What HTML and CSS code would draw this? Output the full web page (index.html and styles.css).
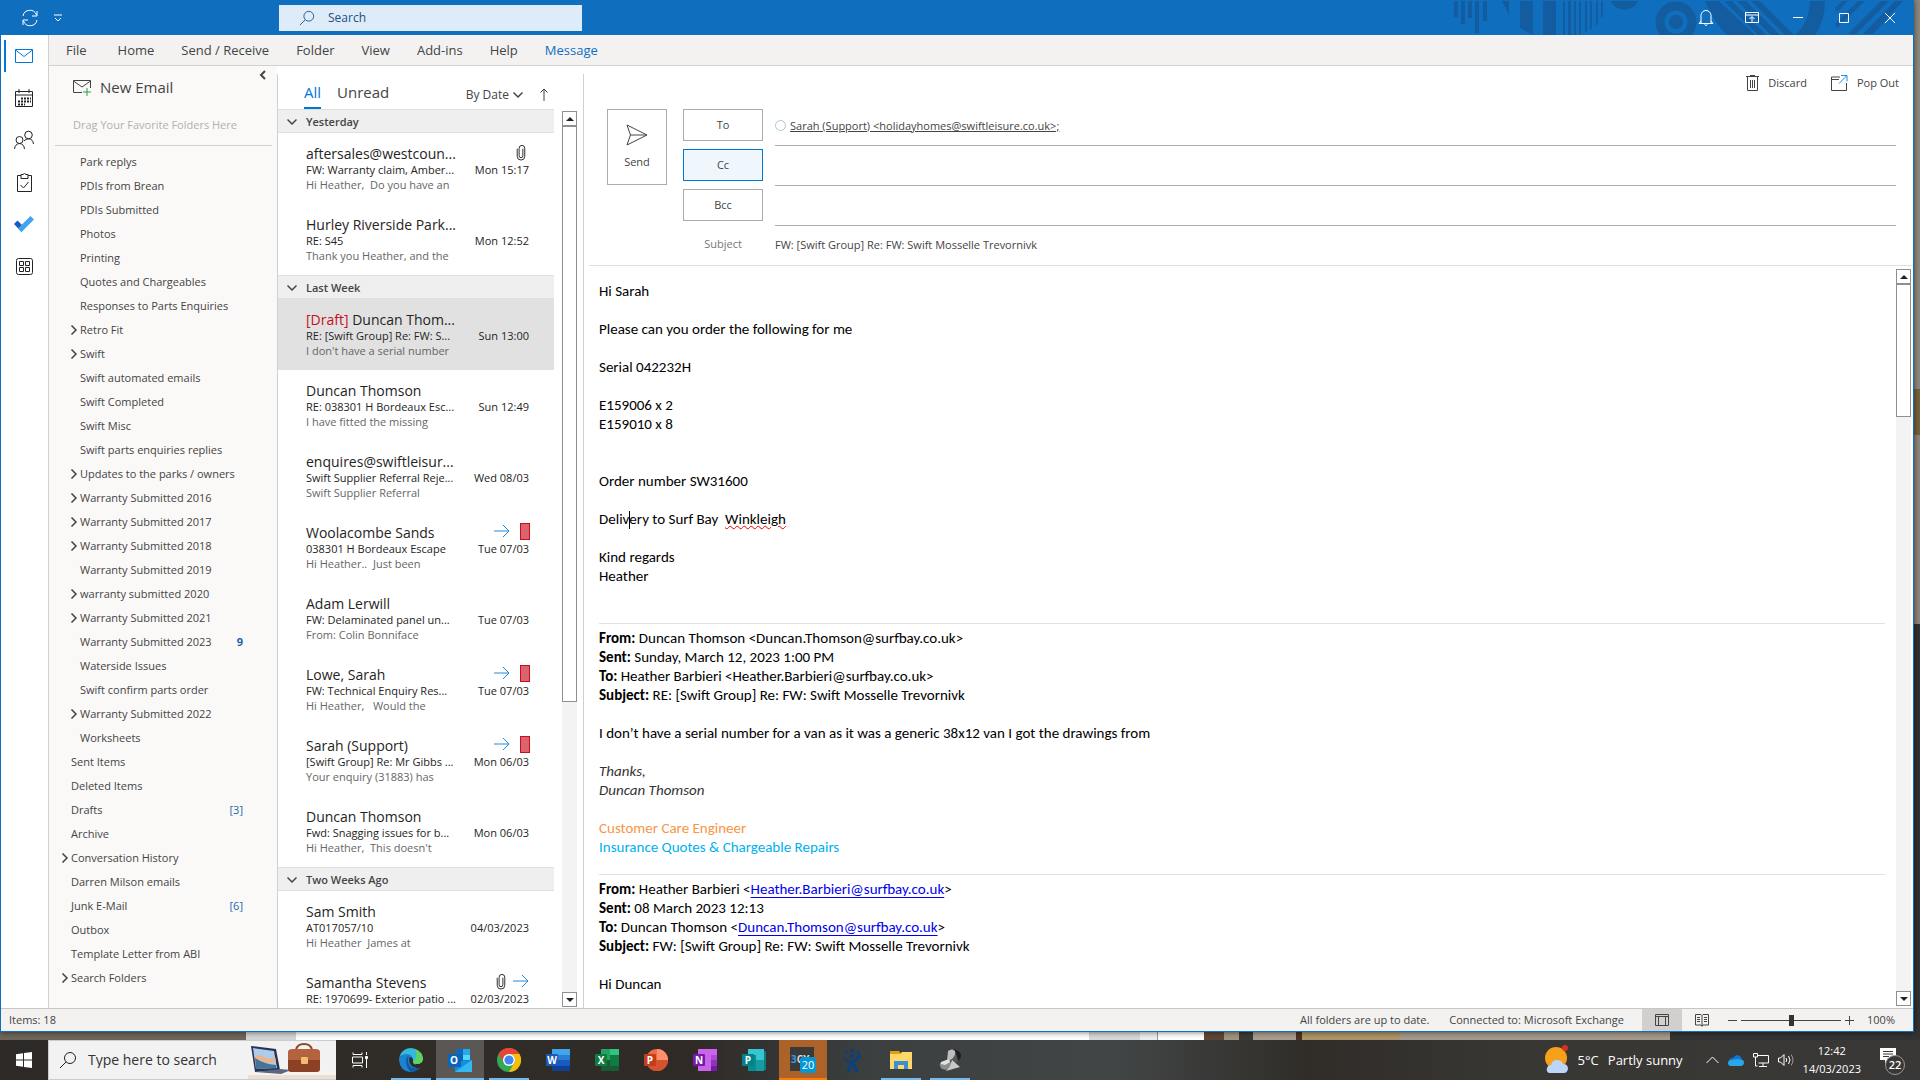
FILE: index.html
```html
<!DOCTYPE html>
<html lang="en">
<head>
<meta charset="UTF-8" />
<meta name="viewport" content="width=device-width, initial-scale=1" />
<title>Inbox - Outlook</title>
<link rel="stylesheet" href="styles.css">
</head>
<body>
  <!-- Shared icons -->
  <svg class="sprite" aria-hidden="true">
    <symbol id="i-chevron" viewBox="0 0 10 10"><path d="M2.5 .5 7 5 2.5 9.500" /></symbol>
    <symbol id="i-down" viewBox="0 0 10 10"><path d="M.5 2.500 5 7l4.500-4.500" /></symbol>
    <symbol id="i-forward" viewBox="0 0 16 14"><path d="M0 7h15M9 1l6 6-6 6" /></symbol>
    <symbol id="i-clip" viewBox="0 0 10 18"><path d="M7 5v7.500a2 2 0 0 1-4 0V4.500a3 3 0 0 1 6 0V13a4 4 0 0 1-8 0V5" /></symbol>
    <symbol id="i-search" viewBox="0 0 18 18"><circle cx="11" cy="7" r="5.500" /><path d="M7 11 1 17" /></symbol>
    <symbol id="i-up-arrow" viewBox="0 0 8 4"><path d="M0 4 4 0l4 4z" /></symbol>
    <symbol id="i-down-arrow" viewBox="0 0 8 4"><path d="M0 0l4 4 4-4z" /></symbol>
  </svg>

  <div class="desktop">
    <div class="window">
      <header class="titlebar">
        <svg class="titlebar-art" viewBox="0 0 460 35" aria-hidden="true">
          <path d="M1 1h4v16H1zM8 1h4v23H8zM15 1h4v17h-4zM22 1h4v32h-4zM30 1h4v20h-4zM49 1h7v14zM67 1h13v34l-13-7zM90 1h13v34H90zM110 1h2v34h-2zM115 1h3v34h-3zM121 1h2v34h-2zM126 1h2v33h-2zM132 1h2v31h-2zM137 1h2v28h-2zM143 1h2v24h-2zM148 1h2v16h-2zM158 1h27a14 12 0 0 1-27 0z" />
          <circle cx="223" cy="22" r="16" class="ring" />
          <circle cx="223" cy="22" r="7" />
          <path d="M252 1h14l36 34h-28q-14-14-22-34zM271 1h8l34 34h-8zM284 1h9l34 34h-9zM298 1h9l34 34h-9zM357 1h15q0 20-10 34h-20q14-12 15-34z" />
          <path d="M382 8l7-7h6l-11 11zM382 24l23-23h7l-28 27zM395 34l33-33h8l-33 33zM420 34l30-33h-8l-32 33z" />
        </svg>
        <div class="quick">
          <button type="button" aria-label="Send and receive">
            <svg width="18" height="18" viewBox="0 0 18 18"><path d="M2 7a7 7 0 0 1 13.500-1M16 2v5h-5M16 11a7 7 0 0 1-13.500 1M2 16v-5h5" /></svg>
          </button>
          <button type="button" aria-label="Customise toolbar">
            <svg width="8" height="8" viewBox="0 0 8 8"><path d="M0 1h8M1 4l3 3 3-3" /></svg>
          </button>
        </div>
        <label class="search">
          <svg width="16" height="16"><use href="#i-search" /></svg>
          <input type="text" placeholder="Search" aria-label="Search" />
        </label>
        <div class="window-buttons">
          <button type="button" aria-label="Notifications">
            <svg width="16" height="18" viewBox="0 0 16 18"><path d="M1 14.500h14M3 14V6.500a5 5 0 0 1 10 0V14M1 14.500 3 12M15 14.500 13 12M6.500 15.500q1.500 2 3 0" /></svg>
          </button>
          <button type="button" aria-label="Ribbon options">
            <svg width="14" height="12" viewBox="0 0 14 12"><path d="M.5.5h13v10H.5zM.5 3h13M7 10V5M4.500 7 7 4.500 9.500 7" /></svg>
          </button>
          <button type="button" aria-label="Minimise">
            <svg width="10" height="10" viewBox="0 0 10 10"><path d="M0 4.500h10" /></svg>
          </button>
          <button type="button" aria-label="Maximise">
            <svg width="10" height="10" viewBox="0 0 10 10"><path d="M.5.5h9v9h-9z" /></svg>
          </button>
          <button type="button" aria-label="Close">
            <svg width="10" height="10" viewBox="0 0 10 10"><path d="M0 0l10 10M10 0 0 10" /></svg>
          </button>
        </div>
      </header>

      <div class="workspace">
        <nav class="rail" aria-label="Modules">
          <a class="active" href="#" aria-label="Mail">
            <svg width="18" height="14" viewBox="0 0 18 14"><path d="M.5.5h17v13H.5zM.5 1 9 7.500 17.500 1" /></svg>
          </a>
          <a href="#" aria-label="Calendar">
            <svg width="18" height="19" viewBox="0 0 18 19"><path d="M.5 2.500h17v15H.5zM.5 6h17M4 0v4M14 0v4" /><path class="dots" d="M6 9.500h10M3 12.500h13M3 15.500h7" /></svg>
          </a>
          <a href="#" aria-label="People">
            <svg width="20" height="20" viewBox="0 0 20 20"><circle cx="14.500" cy="5" r="3.800" /><circle cx="5.500" cy="10" r="3.500" /><path d="M.5 19q.5-5 5-5.500 4.500.5 5 5.500M10 11q2-2.300 4.500-2.200 4.500.3 5 5.200" /></svg>
          </a>
          <a href="#" aria-label="Tasks">
            <svg width="15" height="19" viewBox="0 0 15 19"><path d="M4 2.500H.5v16h14v-16H11M4 1.500h2q1.500-2 3 0h2v4H4zM3.500 12l3 3 5-6" /></svg>
          </a>
          <a href="#" aria-label="To Do">
            <svg class="todo" width="20" height="16" viewBox="0 0 20 16"><path fill="#185abd" d="M3.500 4.500 11 12l-3.500 4L0 8z" /><path fill="#41a5ee" d="M16.500 0 20 3.500 7.500 16 4 12.500z" /></svg>
          </a>
          <a href="#" aria-label="More apps">
            <svg width="17" height="17" viewBox="0 0 17 17"><rect x=".5" y=".5" width="16" height="16" rx="2" /><path d="M3.500 3.500h4v4h-4zM9.500 3.500h4v4h-4zM3.500 9.500h4v4h-4zM9.500 9.500h4v4h-4z" /></svg>
          </a>
        </nav>

        <div class="main">
          <nav class="menu" aria-label="Ribbon">
            <a href="#">File</a>
            <a href="#">Home</a>
            <a href="#">Send / Receive</a>
            <a href="#">Folder</a>
            <a href="#">View</a>
            <a href="#">Add-ins</a>
            <a href="#">Help</a>
            <a class="current" href="#">Message</a>
          </nav>

          <div class="panes">
            <aside class="folders">
              <div class="new-email">
                <button type="button">
                  <svg width="18" height="17" viewBox="0 0 18 17"><path d="M9 13.500H.5v-12h17V9M.5 2 9 8l8.500-6" /><path class="plus" d="M14 9v8M10 13h8" /></svg>
                  New Email
                </button>
                <button type="button" class="collapse" aria-label="Collapse folder pane">
                  <svg width="8" height="10" viewBox="0 0 8 10"><path d="M6 1 2 5l4 4" /></svg>
                </button>
              </div>
              <p class="favorites">Drag Your Favorite Folders Here</p>
              <ul class="folder-list sub">
                <li><a href="#">Park replys</a></li>
                <li><a href="#">PDIs from Brean</a></li>
                <li><a href="#">PDIs Submitted</a></li>
                <li><a href="#">Photos</a></li>
                <li><a href="#">Printing</a></li>
                <li><a href="#">Quotes and Chargeables</a></li>
                <li><a href="#">Responses to Parts Enquiries</a></li>
                <li><svg><use href="#i-chevron" /></svg><a href="#">Retro Fit</a></li>
                <li><svg><use href="#i-chevron" /></svg><a href="#">Swift</a></li>
                <li><a href="#">Swift automated emails</a></li>
                <li><a href="#">Swift Completed</a></li>
                <li><a href="#">Swift Misc</a></li>
                <li><a href="#">Swift parts enquiries replies</a></li>
                <li><svg><use href="#i-chevron" /></svg><a href="#">Updates to the parks / owners</a></li>
                <li><svg><use href="#i-chevron" /></svg><a href="#">Warranty Submitted 2016</a></li>
                <li><svg><use href="#i-chevron" /></svg><a href="#">Warranty Submitted 2017</a></li>
                <li><svg><use href="#i-chevron" /></svg><a href="#">Warranty Submitted 2018</a></li>
                <li><a href="#">Warranty Submitted 2019</a></li>
                <li><svg><use href="#i-chevron" /></svg><a href="#">warranty submitted 2020</a></li>
                <li><svg><use href="#i-chevron" /></svg><a href="#">Warranty Submitted 2021</a></li>
                <li><a href="#">Warranty Submitted 2023</a><b class="count">9</b></li>
                <li><a href="#">Waterside Issues</a></li>
                <li><a href="#">Swift confirm parts order</a></li>
                <li><svg><use href="#i-chevron" /></svg><a href="#">Warranty Submitted 2022</a></li>
                <li><a href="#">Worksheets</a></li>
              </ul>
              <ul class="folder-list">
                <li><a href="#">Sent Items</a></li>
                <li><a href="#">Deleted Items</a></li>
                <li><a href="#">Drafts</a><span class="count">[3]</span></li>
                <li><a href="#">Archive</a></li>
                <li><svg><use href="#i-chevron" /></svg><a href="#">Conversation History</a></li>
                <li><a href="#">Darren Milson emails</a></li>
                <li><a href="#">Junk E-Mail</a><span class="count">[6]</span></li>
                <li><a href="#">Outbox</a></li>
                <li><a href="#">Template Letter from ABI</a></li>
                <li><svg><use href="#i-chevron" /></svg><a href="#">Search Folders</a></li>
              </ul>
            </aside>

            <section class="messages" aria-label="Messages">
              <div class="filters">
                <button type="button" class="tab active">All</button>
                <button type="button" class="tab">Unread</button>
                <button type="button" class="sort">By Date <svg width="9" height="9"><use href="#i-down" /></svg></button>
                <button type="button" class="order" aria-label="Reverse order">
                  <svg width="8" height="13" viewBox="0 0 8 13"><path d="M4 13V1M.5 4.500 4 1l3.500 3.500" /></svg>
                </button>
              </div>
              <div class="list-row">
                <div class="list">
                  <h2><svg><use href="#i-down" /></svg>Yesterday</h2>
                  <article>
                    <div class="top"><h3>aftersales@westcoun...</h3><svg class="clip"><use href="#i-clip" /></svg></div>
                    <div class="line"><span>FW: Warranty claim, Amber...</span><time>Mon 15:17</time></div>
                    <p>Hi Heather,&nbsp; Do you have an</p>
                  </article>
                  <article>
                    <div class="top"><h3>Hurley Riverside Park...</h3></div>
                    <div class="line"><span>RE: S45</span><time>Mon 12:52</time></div>
                    <p>Thank you Heather, and the</p>
                  </article>
                  <h2><svg><use href="#i-down" /></svg>Last Week</h2>
                  <article class="selected">
                    <div class="top"><h3><em>[Draft]</em> Duncan Thom...</h3></div>
                    <div class="line"><span>RE: [Swift Group] Re: FW: S...</span><time>Sun 13:00</time></div>
                    <p>I don't have a serial number</p>
                  </article>
                  <article>
                    <div class="top"><h3>Duncan Thomson</h3></div>
                    <div class="line"><span>RE: 038301 H Bordeaux Esc...</span><time>Sun 12:49</time></div>
                    <p>I have fitted the missing</p>
                  </article>
                  <article>
                    <div class="top"><h3>enquires@swiftleisur...</h3></div>
                    <div class="line"><span>Swift Supplier Referral Reje...</span><time>Wed 08/03</time></div>
                    <p>Swift Supplier Referral</p>
                  </article>
                  <article>
                    <div class="top"><h3>Woolacombe Sands</h3><svg class="fwd"><use href="#i-forward" /></svg><i class="category"></i></div>
                    <div class="line"><span>038301 H Bordeaux Escape</span><time>Tue 07/03</time></div>
                    <p>Hi Heather..&nbsp; Just been</p>
                  </article>
                  <article>
                    <div class="top"><h3>Adam Lerwill</h3></div>
                    <div class="line"><span>FW: Delaminated panel un...</span><time>Tue 07/03</time></div>
                    <p>From: Colin Bonniface</p>
                  </article>
                  <article>
                    <div class="top"><h3>Lowe, Sarah</h3><svg class="fwd"><use href="#i-forward" /></svg><i class="category"></i></div>
                    <div class="line"><span>FW: Technical Enquiry Res...</span><time>Tue 07/03</time></div>
                    <p>Hi Heather,&nbsp;&nbsp; Would the</p>
                  </article>
                  <article>
                    <div class="top"><h3>Sarah (Support)</h3><svg class="fwd"><use href="#i-forward" /></svg><i class="category"></i></div>
                    <div class="line"><span>[Swift Group] Re: Mr Gibbs ...</span><time>Mon 06/03</time></div>
                    <p>Your enquiry (31883) has</p>
                  </article>
                  <article>
                    <div class="top"><h3>Duncan Thomson</h3></div>
                    <div class="line"><span>Fwd: Snagging issues for b...</span><time>Mon 06/03</time></div>
                    <p>Hi Heather,&nbsp; This doesn't</p>
                  </article>
                  <h2><svg><use href="#i-down" /></svg>Two Weeks Ago</h2>
                  <article>
                    <div class="top"><h3>Sam Smith</h3></div>
                    <div class="line"><span>AT017057/10</span><time>04/03/2023</time></div>
                    <p>Hi Heather&nbsp; James at</p>
                  </article>
                  <article>
                    <div class="top"><h3>Samantha Stevens</h3><svg class="clip"><use href="#i-clip" /></svg><svg class="fwd last"><use href="#i-forward" /></svg></div>
                    <div class="line"><span>RE: 1970699- Exterior patio ...</span><time>02/03/2023</time></div>
                  </article>
                </div>
                <div class="scrollbar list-scroll">
                  <button type="button" aria-label="Scroll up"><svg><use href="#i-up-arrow" /></svg></button>
                  <div class="thumb"></div>
                  <button type="button" class="end" aria-label="Scroll down"><svg><use href="#i-down-arrow" /></svg></button>
                </div>
              </div>
            </section>

            <section class="compose" aria-label="Reply">
              <div class="actions">
                <button type="button">
                  <svg width="13" height="16" viewBox="0 0 13 16"><path d="M0 1.500h13M4 .5h5M1.500 2v13.500h10V2M4.500 5v8M6.500 5v8M8.500 5v8" /></svg>
                  Discard
                </button>
                <button type="button">
                  <svg width="17" height="16" viewBox="0 0 17 16"><path d="M9 2H.5v13.500h15V8M.5 4.500H8" /><path class="blue" d="M8 8.500 15.500 1M10 .5h6v6" /></svg>
                  Pop Out
                </button>
              </div>
              <div class="address">
                <button type="button" class="send">
                  <svg width="22" height="22" viewBox="0 0 22 22"><path d="M1 1 21 11 1 21 4.500 11zM4.500 11H21" /></svg>
                  Send
                </button>
                <div class="fields">
                  <div class="field">
                    <button type="button">To</button>
                    <div class="value"><i class="presence"></i><a href="#">Sarah (Support) &lt;holidayhomes@swiftleisure.co.uk&gt;;</a></div>
                  </div>
                  <div class="field">
                    <button type="button" class="focused">Cc</button>
                    <input class="value" type="text" aria-label="Cc" />
                  </div>
                  <div class="field">
                    <button type="button">Bcc</button>
                    <input class="value" type="text" aria-label="Bcc" />
                  </div>
                  <div class="field subject">
                    <label for="subject">Subject</label>
                    <input class="value" type="text" id="subject" value="FW: [Swift Group] Re: FW: Swift Mosselle Trevornivk" />
                  </div>
                </div>
              </div>
              <div class="body-row">
                <div class="mail-body">
                  <p>Hi Sarah</p>
                  <p>Please can you order the following for me</p>
                  <p>Serial 042232H</p>
                  <p>E159006 x 2<br>E159010 x 8</p>
                  <p class="gap">Order number SW31600</p>
                  <p>Deliv<i class="caret"></i>ery to Surf Bay&nbsp; <span class="misspelt">Winkleigh</span></p>
                  <p>Kind regards<br>Heather</p>
                  <div class="quoted first">
                    <p><b>From:</b> Duncan Thomson &lt;Duncan.Thomson@surfbay.co.uk&gt;<br>
                    <b>Sent:</b> Sunday, March 12, 2023 1:00 PM<br>
                    <b>To:</b> Heather Barbieri &lt;Heather.Barbieri@surfbay.co.uk&gt;<br>
                    <b>Subject:</b> RE: [Swift Group] Re: FW: Swift Mosselle Trevornivk</p>
                    <p>I don’t have a serial number for a van as it was a generic 38x12 van I got the drawings from</p>
                    <p class="signoff">Thanks,<br>Duncan Thomson</p>
                    <p><span class="role">Customer Care Engineer</span><br><span class="team">Insurance Quotes &amp; Chargeable Repairs</span></p>
                  </div>
                  <div class="quoted">
                    <p><b>From:</b> Heather Barbieri &lt;<a href="#">Heather.Barbieri@surfbay.co.uk</a>&gt;<br>
                    <b>Sent:</b> 08 March 2023 12:13<br>
                    <b>To:</b> Duncan Thomson &lt;<a href="#">Duncan.Thomson@surfbay.co.uk</a>&gt;<br>
                    <b>Subject:</b> FW: [Swift Group] Re: FW: Swift Mosselle Trevornivk</p>
                    <p>Hi Duncan</p>
                  </div>
                </div>
                <div class="scrollbar body-scroll">
                  <button type="button" aria-label="Scroll up"><svg><use href="#i-up-arrow" /></svg></button>
                  <div class="thumb"></div>
                  <button type="button" class="end" aria-label="Scroll down"><svg><use href="#i-down-arrow" /></svg></button>
                </div>
              </div>
            </section>
          </div>
        </div>
      </div>

      <footer class="status">
        <span class="items">Items: 18</span>
        <span>All folders are up to date.</span>
        <span>Connected to: Microsoft Exchange</span>
        <div class="views">
          <button type="button" class="on" aria-label="Normal view">
            <svg width="14" height="12" viewBox="0 0 14 12"><path d="M.5.5h13v11H.5zM.5 2.500h13M3.500 2.500v9M10.500 2.500v9" /></svg>
          </button>
          <button type="button" aria-label="Reading view">
            <svg width="14" height="13" viewBox="0 0 14 13"><path d="M7 1.500v11M.5.5H6l1 1 1-1h5.500v10.500H8l-1 1-1-1H.5zM2 3.500h3M2 5.500h3M2 7.500h3M9 3.500h3M9 5.500h3M9 7.500h3" /></svg>
          </button>
        </div>
        <div class="zoom">
          <button type="button" aria-label="Zoom out"><svg width="9" height="9" viewBox="0 0 9 9"><path d="M0 4.500h9" /></svg></button>
          <input type="range" min="0" max="100" value="50" aria-label="Zoom" />
          <button type="button" aria-label="Zoom in"><svg width="9" height="9" viewBox="0 0 9 9"><path d="M0 4.500h9M4.500 0v9" /></svg></button>
        </div>
        <span>100%</span>
      </footer>
    </div>
  </div>

  <footer class="taskbar">
    <button type="button" class="start" aria-label="Start">
      <svg width="16" height="16" viewBox="0 0 16 16"><path d="M0 2.200 7 1.200v6.300H0zM8 1l8-1v7.500H8zM0 8.500h7v6.300l-7-1zM8 8.500h8V16l-8-1z" /></svg>
    </button>
    <label class="task-search">
      <svg class="glass" width="18" height="18"><use href="#i-search" /></svg>
      <input type="text" placeholder="Type here to search" aria-label="Type here to search" />
      <svg class="art" width="88" height="38" viewBox="0 0 88 38" aria-hidden="true">
        <path fill="#e9dfd5" d="M0 34h88v4H0z" /><path fill="#f8f3ee" d="M4 30h80l4 4H0z" />
        <path fill="#2b3350" d="M3 5l25 3 4 21L7 31z" /><path fill="#a9cdea" d="M5 7l21 3 3 17L8 28z" />
        <path fill="#e7b592" d="M7 15q6-2 10 1t10 0l1 5-20 3z" /><path fill="#46739a" d="M7 17q9 6 21 7v3L8 28z" />
        <path fill="#5b6684" d="M7 31l25-3 11 1-10 4z" />
        <path fill="none" stroke="#8d4a2b" stroke-width="2" d="M48 9q1-6 8-6t8 6" />
        <rect x="40" y="9" width="32" height="22" rx="3" fill="#8b4126" /><path fill="#b5633f" d="M40 12q0-4 4-4h24q4 0 4 4v7H40z" />
        <rect x="53" y="16" width="7" height="7" rx="1" fill="#f0bd6c" />
      </svg>
    </label>
    <button type="button" class="task task-view" aria-label="Task view">
      <svg class="line" width="17" height="16" viewBox="0 0 17 16"><path d="M1 .5v2h9v-2M1 15.500v-2h9v2M.5 5h10v6H.5zM14.500 0v3M14.500 7v9" /><path d="M13.500 4.500h2v2h-2z" fill="#fff" /></svg>
    </button>
    <button type="button" class="task running" aria-label="Edge">
      <svg width="24" height="24" viewBox="0 0 24 24"><path fill="#1b84d1" d="M0 12Q0 5 6 2L17 2v20q-3 2-6 2Q1 23 0 12z" /><path fill="#35b9dc" d="M1 8Q4 0 12 0t12 10q0 6-7 6-4 0-3-3 1-6-6-7-4 0-7 2z" /><path fill="#5fd35f" d="M16 1q8 3 8 9.500 0 5.500-7 5.500-4 0-3-3 6-3 2-12z" /><path fill="#0f5aa6" d="M7 13q0-4 3-5.500-1 2-1 5 0 6 5 7.500 4 1 8-1-4 5-10 5-5-4-5-11z" /><path fill="#2f2b27" d="M10.500 9q3.500.5 3.500 3.500-1 2 1 3.500 4 2 8 0v2q-4 3-9 1-5-3-3.500-10z" /></svg>
    </button>
    <button type="button" class="task open" aria-label="Outlook">
      <svg width="24" height="24" viewBox="0 0 24 24"><path fill="#0f6cbd" d="M8 1h14v12H8z" /><path fill="#28a8ea" d="M15 1h7v6h-7z" /><path fill="#0364b8" d="M8 7h7v6H8z" /><path fill="#50d9ff" d="M15 7h7v5h-7z" /><path fill="#1490df" d="M7 13l17-1v12H7z" /><path fill="#35b8f1" d="M7 24l17-12v12z" /><rect y="6" width="13" height="13" rx="1" fill="#0a64b8" /><text x="6" y="16" class="letter">O</text></svg>
    </button>
    <button type="button" class="task running" aria-label="Chrome">
      <svg width="24" height="24" viewBox="0 0 24 24"><circle cx="12" cy="12" r="12" fill="#34a853" /><path fill="#ea4335" d="M1.600 6A12 12 0 0 1 22.400 6H12a6 6 0 0 0-5.200 9z" /><path fill="#fbbc05" d="M22.400 6A12 12 0 0 1 12 24l5.200-9A6 6 0 0 0 12 6z" /><circle cx="12" cy="12" r="6" fill="#fff" /><circle cx="12" cy="12" r="4.600" fill="#4285f4" /></svg>
    </button>
    <button type="button" class="task" aria-label="Word">
      <svg width="24" height="24" viewBox="0 0 24 24"><path fill="#41a5ee" d="M6 1h18v6H6z" /><path fill="#2b7cd3" d="M6 7h18v5H6z" /><path fill="#185abd" d="M6 12h18v6H6z" /><path fill="#103f91" d="M6 18h18v5H6z" /><rect y="6" width="12" height="12" rx="1" fill="#185abd" /><text x="6" y="16" class="letter">W</text></svg>
    </button>
    <button type="button" class="task" aria-label="Excel">
      <svg width="24" height="24" viewBox="0 0 24 24"><path fill="#21a366" d="M6 1h9v11H6z" /><path fill="#33c481" d="M15 1h9v6h-9z" /><path fill="#107c41" d="M15 7h9v5h-9z" /><path fill="#185c37" d="M6 12h18v11H6z" /><path fill="#107c41" d="M15 12h9v6h-9z" /><rect y="6" width="12" height="12" rx="1" fill="#107c41" /><text x="6" y="16" class="letter">X</text></svg>
    </button>
    <button type="button" class="task" aria-label="PowerPoint">
      <svg width="24" height="24" viewBox="0 0 24 24"><circle cx="13" cy="12" r="11" fill="#ed6c47" /><path fill="#ff8f6b" d="M13 1a11 11 0 0 1 11 11H13z" /><path fill="#d35230" d="M24 12a11 11 0 0 1-22 0z" /><rect y="6" width="12" height="12" rx="1" fill="#c43e1c" /><text x="6" y="16" class="letter">P</text></svg>
    </button>
    <button type="button" class="task" aria-label="OneNote">
      <svg width="24" height="24" viewBox="0 0 24 24"><path fill="#ca64ea" d="M5 1h19v22H5z" /><path fill="#ae4bd5" d="M18 7h6v5h-6z" /><path fill="#9332bf" d="M18 12h6v6h-6z" /><path fill="#7719aa" d="M18 18h6v5h-6z" /><rect y="6" width="12" height="12" rx="1" fill="#7719aa" /><text x="6" y="16" class="letter">N</text></svg>
    </button>
    <button type="button" class="task" aria-label="Publisher">
      <svg width="24" height="24" viewBox="0 0 24 24"><path fill="#038387" d="M12 3h12v19H12z" /><path fill="#37c6d0" d="M6 1h16v11H6z" /><path fill="#1a9ba1" d="M6 12h16v11H6z" /><path fill="#058f92" d="M6 7h8v16H6z" /><rect y="6" width="12" height="12" rx="1" fill="#038387" /><text x="6" y="16" class="letter">P</text></svg>
    </button>
    <button type="button" class="task alert" aria-label="3CX">
      <svg width="26" height="26" viewBox="0 0 26 26"><path fill="#3a3a3a" d="M0 0h24v24H0z" /><text x="1" y="16" class="cx"><tspan fill="#2f9fe0">3</tspan>CX</text><rect x="10" y="10" width="16" height="16" rx="3" fill="#0596d4" /><text x="18" y="22" class="cx-count">20</text></svg>
    </button>
    <button type="button" class="task" aria-label="Support desk">
      <svg width="20" height="24" viewBox="0 0 20 24"><g fill="#0b3f7d"><circle cx="10" cy="2.500" r="1.800" /><circle cx="4" cy="4" r="1.600" /><circle cx="16" cy="4" r="1.600" /><circle cx="10" cy="8" r="2.200" /><path d="M1 6q2 6 9 8 6 3 6 10h-3q-1-6-5-8-6-3-7-10zM19 6q-1 6-7 9l-3-2q6-2 7-7zM8 16q-3 3-3 8h3q0-4 3-6z" /></g></svg>
    </button>
    <button type="button" class="task running" aria-label="File Explorer">
      <svg width="22" height="20" viewBox="0 0 22 20"><path fill="#e3a008" d="M0 1h9l2 3H0z" /><path fill="#ffd869" d="M0 4l10 0 2-2h10v17H0z" /><path fill="#3b8fd6" d="M4 11h14v8h-4v-4H8v4H4z" /></svg>
    </button>
    <button type="button" class="task running" aria-label="Scanner">
      <svg width="24" height="24" viewBox="0 0 24 24"><path fill="#555" d="M11 3q4-4 10 0 3 4 1 8l-4 4-8-3z" /><path fill="#1e1e1e" d="M15 1q7 1 8 6 0 4-3 6-1-7-5-12z" /><path fill="#bdbdbd" d="M10 3q4-3 7 0 1 4-3 8l-5 2z" /><path fill="#8e8e8e" d="M2 15l9-4 2 4-4 7-5-1q-3-3-2-6z" /><path fill="#e2e2e2" d="M3 14l8-3 1 3-5 3-4-1z" /><path fill="#c8c8c8" d="M14 12l8 7-7 2-7 2q4-4 6-11z" /></svg>
    </button>

    <div class="tray">
      <button type="button" class="weather">
        <svg width="24" height="30" viewBox="0 0 24 30"><circle cx="11" cy="13" r="11" fill="#f7a11b" /><path fill="#bcd6fb" d="M4 28q-3-1-2-5 1-3 4-3 1-5 6-5t6 4q5 0 5 5-1 4-4 4z" /><circle cx="20" cy="3" r="3" fill="#d93025" /></svg>
        <span>5°C</span><span>Partly sunny</span>
      </button>
      <svg class="line" width="13" height="8" viewBox="0 0 13 8"><path d="M.5 7 6.500 1l6 6" /></svg>
      <svg width="16" height="11" viewBox="0 0 16 11"><path fill="#0f78d4" d="M1 8q-1-5 4-5 2-3 5-3 3 1 4 4l-4 5z" /><path fill="#28a8ea" d="M3 11q-3 0-3-3t4-3l5-1 6 1q2 3 0 5-1 1-2 1z" /></svg>
      <svg class="line" width="16" height="14" viewBox="0 0 16 14"><path d="M5 2.500h10.500v7.500h-10M10 10v3M6 13.500h8M.5.5h4v3.500h-4zM2.500 4v9h2" /></svg>
      <svg class="line" width="16" height="14" viewBox="0 0 16 14"><path d="M.5 5h2L6 1.500v11L2.500 9h-2zM8 5q1.500 2 0 4M10.500 3q3 4 0 8" /><path d="M13 1.500q4 5.500 0 11" opacity=".5" /></svg>
      <div class="clock"><time>12:42</time><time>14/03/2023</time></div>
      <button type="button" class="notes" aria-label="22 notifications">
        <svg width="16" height="16" viewBox="0 0 16 16"><path fill="#fff" d="M0 0h16v12H8l-3 4v-4H0z" /><path stroke="#3a3836" d="M3 3.500h10M3 6h10M3 8.500h6" /></svg>
        <span class="badge">22</span>
      </button>
    </div>
  </footer>
</body>
</html>
```
FILE: styles.css
```css
*,
*::before,
*::after {
  box-sizing: border-box;
}

body {
  margin: 0;
  height: 100vh;
  display: flex;
  flex-direction: column;
  overflow: hidden;
  font-family: 'Segoe UI', 'Open Sans', sans-serif;
  font-size: 11px;
  line-height: 16px;
  color: #444;
}

h2, h3, p, ul {
  margin: 0;
  padding: 0;
  font-weight: 400;
}

ul {
  list-style: none;
}

a {
  color: inherit;
  text-decoration: none;
}

button,
input {
  font: inherit;
  color: inherit;
  border: 0;
  padding: 0;
  margin: 0;
  background: none;
}

button {
  display: flex;
  align-items: center;
  justify-content: center;
}

input {
  min-width: 0;
  outline: none;
}

svg {
  fill: none;
  stroke: currentColor;
  flex: none;
}

.sprite {
  position: absolute;
  width: 0;
  height: 0;
}

/* Desktop behind the window */
.desktop {
  flex: 1;
  min-height: 0;
  padding: 0 6px 8px 0;
  background:
    linear-gradient(90deg, #6d675a 0 246px, #d4d4d4 246px 296px, #fff 296px 1089px, #d8d8d8 1089px 1140px, #eee 1140px 1157px, #999 1157px 1158px, #fff 1158px 1204px, #5d4836 1204px 1224px, #a0937f 1224px 1239px, #3a3a36 1239px 1253px, #a89e8e 1253px 1296px, #4a3222 1296px 1302px, #ad9468 1302px 1400px, #a39a8b 1400px 1670px, #333 1670px) bottom / 100% 8px no-repeat,
    linear-gradient(#8d8b80 0 389px, #77623c 389px 435px, #8f867c 435px 624px, #333 624px);
}

.window {
  height: 100%;
  display: flex;
  flex-direction: column;
  background: #fff;
  border: 1px solid #106ebe;
  border-top: 0;
  box-shadow: 0 0 6px rgba(0, 0, 0, 0.6);
}

/* Title bar */
.titlebar {
  position: relative;
  flex: none;
  height: 35px;
  display: flex;
  align-items: center;
  background: #106ebe;
  color: #fff;
}

.titlebar-art {
  position: absolute;
  right: 0;
  top: 0;
  width: 460px;
  height: 35px;
  fill: #135c9f;
  stroke: none;
}

.titlebar-art .ring {
  fill: none;
  stroke: #135c9f;
  stroke-width: 9;
}

.quick {
  width: 278px;
  display: flex;
  align-items: center;
  gap: 15px;
  padding-left: 20px;
}

.search {
  width: 303px;
  height: 26px;
  display: flex;
  align-items: center;
  gap: 13px;
  padding: 1px 0 0 20px;
  background: #deecf9;
  color: #1b5083;
  font-size: 12px;
}

.search input::placeholder {
  color: #1b5083;
  opacity: 1;
}

.window-buttons {
  position: relative;
  display: flex;
  margin-left: auto;
}

.window-buttons button {
  width: 46px;
  height: 35px;
}

/* Module rail */
.workspace {
  flex: 1;
  min-height: 0;
  display: flex;
}

.rail {
  flex: none;
  width: 48px;
  padding-top: 5px;
  border-right: 1px solid #d2d0ce;
  color: #252423;
}

.rail a {
  display: flex;
  align-items: center;
  justify-content: center;
  height: 32px;
  margin: 0 0 10px 3px;
  padding-right: 6px;
  border-left: 2px solid transparent;
}

.rail .active {
  color: #0078d4;
  border-left-color: #0078d4;
}

.rail .dots {
  stroke-width: 2;
  stroke-dasharray: 2 1;
}

.todo {
  stroke: none;
}

.main {
  flex: 1;
  min-width: 0;
  display: flex;
  flex-direction: column;
}

.menu {
  flex: none;
  height: 31px;
  display: flex;
  align-items: center;
  gap: 27px;
  padding-left: 17px;
  background: #f3f2f1;
  border-bottom: 1px solid #d2d0ce;
  font-size: 13px;
}

.menu a:first-child {
  padding-right: 4px;
}

.menu .current {
  color: #106ebe;
}

.panes {
  flex: 1;
  min-height: 0;
  display: flex;
}

/* Folder pane */
.folders {
  flex: none;
  width: 228px;
  overflow: hidden;
  background: #faf9f8;
  padding: 3px 5px 0 6px;
}

.new-email {
  display: flex;
  justify-content: space-between;
  align-items: flex-start;
  padding-left: 18px;
}

.new-email button {
  height: 36px;
  gap: 9px;
  font-size: 15px;
}

.new-email .plus {
  stroke: #2a9d4a;
}

.new-email .collapse {
  height: 12px;
  margin-right: 5px;
}

.collapse svg {
  stroke-width: 2;
}

.favorites {
  padding: 12px 0 12px 18px;
  line-height: 16px;
  border-bottom: 1px solid #d2d0ce;
  color: #b3b0ad;
}

.folder-list li {
  height: 24px;
  display: flex;
  align-items: center;
  padding-left: 16px;
  position: relative;
  white-space: nowrap;
}

.folder-list.sub {
  padding-top: 4px;
}

.folder-list.sub li {
  padding-left: 25px;
}

.folder-list svg {
  position: absolute;
  margin-left: -11px;
  width: 10px;
  height: 10px;
  stroke-width: 1.5;
}

.folder-list .count {
  position: absolute;
  right: 29px;
  color: #1f64ae;
}

/* Message list */
.messages {
  flex: none;
  width: 307px;
  display: flex;
  flex-direction: column;
  margin-top: 8px;
  border-left: 1px solid #d2d0ce;
  border-right: 1px solid #d2d0ce;
}

.filters {
  flex: none;
  height: 35px;
  display: flex;
  align-items: flex-end;
  padding-left: 26px;
}

.tab {
  height: 32px;
  margin-right: 16px;
  border-bottom: 2px solid transparent;
  font-size: 15px;
}

.tab.active {
  color: #0078d4;
  border-bottom-color: #0078d4;
}

.sort {
  height: 28px;
  gap: 4px;
  margin-left: auto;
  font-size: 12px;
}

.sort svg,
.list h2 svg {
  width: 10px;
  height: 10px;
  stroke-width: 1.5;
}

.order {
  height: 30px;
  margin: 0 35px 0 17px;
}

.list-row {
  flex: 1;
  min-height: 0;
  display: flex;
}

.list {
  flex: 1;
  min-width: 0;
  overflow: hidden;
  color: #252423;
}

.list h2 {
  height: 24px;
  display: flex;
  align-items: center;
  gap: 9px;
  padding: 1px 0 0 9px;
  background: #efefef;
  border-top: 1px solid #e1dfdd;
  border-bottom: 1px solid #e1dfdd;
  font-size: 11px;
  font-weight: 600;
  color: #444;
}

.list article {
  height: 71px;
  padding: 10px 25px 0 28px;
}

.list .selected {
  background: #e1e1e1;
}

.top,
.line {
  display: flex;
  justify-content: space-between;
  white-space: nowrap;
}

.top {
  height: 20px;
  justify-content: flex-end;
}

.top h3 {
  flex: 1;
  font-size: 14px;
  line-height: 22px;
}

.top em {
  font-style: normal;
  color: #c50f1f;
}

.top .fwd {
  width: 16px;
  height: 14px;
  margin: 2px 10px 0 0;
  color: #2488d8;
}

.top .clip {
  width: 10px;
  height: 17px;
  margin: 1px 3px 0 0;
}

.top .clip:nth-last-child(2) {
  margin-right: 0;
}

.top .fwd.last {
  margin: 2px 0 0 7px;
}

.category {
  width: 10px;
  height: 17px;
  margin: 1px -1px 0 0;
  background: #dc626d;
  border: 1px solid #c50f1f;
}

.line {
  line-height: 14px;
}

.list p {
  line-height: 16px;
  color: #666;
}

/* Scrollbars */
.scrollbar {
  flex: none;
  width: 15px;
  display: flex;
  flex-direction: column;
  background: #f3f3f3;
  color: #222;
}

.scrollbar button {
  height: 15px;
  border: 1px solid #8f8f8f;
  background: #fff;
}

.scrollbar button svg {
  width: 8px;
  height: 4px;
  fill: currentColor;
  stroke: none;
}

.scrollbar .thumb {
  background: #fff;
  border: 1px solid #8f8f8f;
}

.scrollbar .end {
  margin-top: auto;
}

.list-scroll {
  margin: 2px 6px 1px 8px;
}

.list-scroll .thumb {
  height: 576px;
}

/* Compose pane */
.compose {
  flex: 1;
  min-width: 0;
  display: flex;
  flex-direction: column;
  padding-left: 5px;
}

.actions {
  display: flex;
  justify-content: flex-end;
  gap: 24px;
  padding: 7px 14px 0 0;
}

.actions button {
  height: 20px;
  gap: 9px;
}

.actions .blue {
  stroke: #2488d8;
}

.address {
  display: flex;
  align-items: flex-start;
  gap: 16px;
  padding: 16px 17px 0 18px;
  border-bottom: 1px solid #e1dfdd;
}

.send {
  width: 60px;
  height: 76px;
  flex-direction: column;
  gap: 8px;
  border: 1px solid #ababab;
}

.fields {
  flex: 1;
  min-width: 0;
}

.field {
  height: 40px;
  display: flex;
  gap: 12px;
}

.field button {
  width: 80px;
  height: 32px;
  border: 1px solid #ababab;
}

.field .focused {
  background: #eff6fc;
  border-color: #0078d4;
}

.field .value {
  flex: 1;
  height: 37px;
  border-bottom: 1px solid #ababab;
}

.field div.value {
  display: flex;
  align-items: center;
  gap: 4px;
  padding-bottom: 3px;
}

.field a {
  text-decoration: underline;
}

.presence {
  width: 11px;
  height: 11px;
  border: 1px solid #a9c8dc;
  border-radius: 50%;
}

.subject {
  height: 36px;
}

.subject label {
  width: 80px;
  line-height: 30px;
  text-align: center;
  color: #777;
}

.field.subject .value {
  height: 30px;
  border: 0;
}

.body-row {
  flex: 1;
  min-height: 0;
  display: flex;
}

.mail-body {
  flex: 1;
  overflow: hidden;
  padding: 16px 11px 0 10px;
  font-family: Calibri, Carlito, Lato, sans-serif;
  font-size: 15px;
  line-height: 19px;
  color: #000;
}

.mail-body p {
  margin-bottom: 19px;
}

.mail-body .gap {
  padding-top: 19px;
}

.mail-body a {
  color: #0000ee;
  text-decoration: underline;
  text-underline-offset: 3px;
}

.caret {
  display: inline-block;
  width: 1px;
  height: 18px;
  margin: -2px -1px -2px 0;
  vertical-align: middle;
  background: #000;
}

.misspelt {
  text-decoration: underline wavy #e00 1px;
}

.quoted {
  padding-top: 5px;
  border-top: 1px solid #e1e1e1;
}

.quoted.first {
  margin-top: 37px;
}

.quoted p:last-child {
  margin-bottom: 17px;
}

.signoff {
  font-style: italic;
  color: #333;
}

.role {
  color: #f79646;
}

.team {
  color: #00b0f0;
}

.body-scroll {
  margin: 3px 2px 2px 0;
}

.body-scroll .thumb {
  height: 18%;
}

/* Status bar */
.status {
  flex: none;
  height: 23px;
  display: flex;
  align-items: center;
  background: #f3f2f1;
  border-top: 1px solid #c8c6c4;
  padding: 0 18px 0 8px;
}

.status .items {
  margin-right: auto;
}

.status span + span {
  margin-left: 20px;
}

.views {
  display: flex;
  margin-left: 18px;
}

.views button {
  width: 40px;
  height: 22px;
}

.views .on {
  background: #d2d0ce;
}

.zoom {
  display: flex;
  align-items: center;
  gap: 4px;
  margin: 0 13px 0 6px;
}

.zoom input {
  width: 100px;
  height: 14px;
  appearance: none;
  background: linear-gradient(#444, #444) center / 100% 1px no-repeat;
}

.zoom input::-webkit-slider-thumb {
  appearance: none;
  width: 5px;
  height: 11px;
  background: #333;
}

/* Taskbar */
.taskbar {
  flex: none;
  height: 40px;
  display: flex;
  background: linear-gradient(90deg, #2d2926 0, #302c28 25%, #2f2a26 36%, #3b3f40 45%, #424646 58%, #302d29 68%, #393734 80%, #3a3836);
  color: #fff;
}

.start {
  width: 48px;
}

.start svg {
  fill: #fff;
  stroke: none;
}

.task-search {
  flex: none;
  width: 288px;
  display: flex;
  align-items: center;
  background: #f2f2f2;
  border: 1px solid #ccc;
  border-right: 0;
  color: #222;
  font-size: 14px;
}

.task-search .glass {
  margin: 0 11px 0 10px;
}

.task-search input {
  flex: 1;
}

.task-search input::placeholder {
  color: #333;
  opacity: 1;
}

.art {
  stroke: none;
}

.task {
  position: relative;
  width: 48px;
  margin-right: 1px;
}

.task-view {
  margin-right: 3px;
}

.task svg {
  stroke: none;
}

.task .line,
.tray .line {
  stroke: #fff;
}

.running::after,
.open::after,
.alert::after {
  content: '';
  position: absolute;
  left: 4px;
  right: 4px;
  bottom: 0;
  height: 2px;
  background: #76b9ed;
}

.open {
  background: #5a5754;
}

.open::after,
.alert::after {
  left: 0;
  right: 0;
}

.alert {
  background: #ac6228;
}

.alert::after {
  background: #ff7a00;
}

.letter {
  fill: #fff;
  font-size: 10px;
  font-weight: 700;
  text-anchor: middle;
}

.cx {
  fill: #ddd;
  font-size: 10px;
  font-weight: 700;
}

.cx-count {
  fill: #fff;
  font-size: 11px;
  text-anchor: middle;
}

.tray {
  display: flex;
  align-items: center;
  gap: 9px;
  margin-left: auto;
  padding-right: 16px;
}

.tray svg {
  stroke: none;
}

.weather {
  gap: 9px;
  margin-right: 14px;
  font-size: 13px;
}

.clock {
  display: flex;
  flex-direction: column;
  align-items: center;
  gap: 2px;
  margin: 0 10px 0 0;
}

.notes {
  position: relative;
  width: 24px;
  height: 24px;
  justify-content: flex-start;
  align-items: flex-start;
}

.badge {
  position: absolute;
  left: 5px;
  top: 7px;
  width: 20px;
  height: 20px;
  line-height: 18px;
  border: 1px solid #999;
  border-radius: 50%;
  background: #3a3836;
  text-align: center;
  font-weight: 600;
}
```
